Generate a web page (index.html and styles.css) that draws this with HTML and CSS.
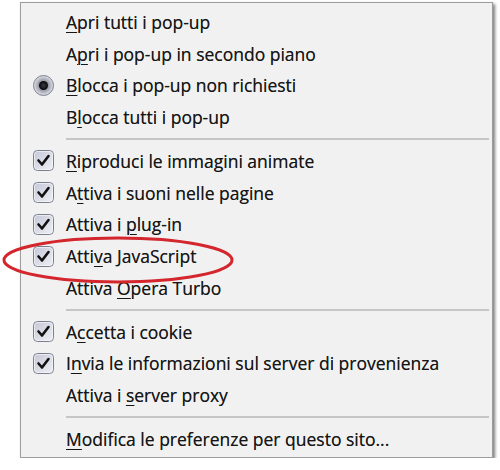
FILE: index.html
```html
<!DOCTYPE html>
<html lang="it">
<head>
    <meta charset="UTF-8">
    <title>Menu pop-up</title>
    <link rel="stylesheet" href="styles.css">
</head>
<body>
    <!-- shared checkbox graphic -->
    <svg width="0" height="0" class="defs">
        <defs>
            <linearGradient id="boxFill" x1="0" y1="0" x2="1" y2="1">
                <stop offset="0" stop-color="#c3c6d6"/>
                <stop offset="1" stop-color="#f0f1f6"/>
            </linearGradient>
            <radialGradient id="dotFill">
                <stop offset="0" stop-color="#3a3a44"/>
                <stop offset="1" stop-color="#050507"/>
            </radialGradient>
            <radialGradient id="ringFill">
                <stop offset="0.5" stop-color="#9a9ca8"/>
                <stop offset="1" stop-color="#e2e3ea"/>
            </radialGradient>
            <symbol id="tick" viewBox="0 0 21 21">
                <rect x="0.5" y="0.5" width="20" height="20" rx="4" fill="url(#boxFill)" stroke="#7b7e8c"/>
                <rect x="1.5" y="1.5" width="18" height="18" rx="3" fill="none" stroke="#f6f6fa" stroke-opacity="0.7"/>
                <path d="M5.5 10.5 L9 14.5 L15.5 6" fill="none" stroke="#111" stroke-width="2.6" stroke-linecap="round" stroke-linejoin="round"/>
            </symbol>
            <symbol id="dot" viewBox="0 0 21 21">
                <circle cx="10.5" cy="10.5" r="10" fill="url(#ringFill)" stroke="#7b7e8c"/>
                <circle cx="10.5" cy="10.5" r="4.5" fill="url(#dotFill)"/>
            </symbol>
        </defs>
    </svg>

    <div class="menu">
        <!-- Pop-up -->
        <div class="item"><span class="mark"></span><span class="label"><u>A</u>pri tutti i pop-up</span></div>
        <div class="item"><span class="mark"></span><span class="label">A<u>p</u>ri i pop-up in secondo piano</span></div>
        <div class="item"><svg class="mark"><use href="#dot"/></svg><span class="label"><u>B</u>locca i pop-up non richiesti</span></div>
        <div class="item"><span class="mark"></span><span class="label">B<u>l</u>occa tutti i pop-up</span></div>
        <div class="sep"></div>

        <!-- Contenuti -->
        <div class="item"><svg class="mark"><use href="#tick"/></svg><span class="label"><u>R</u>iproduci le immagini animate</span></div>
        <div class="item"><svg class="mark"><use href="#tick"/></svg><span class="label">A<u>t</u>tiva i suoni nelle pagine</span></div>
        <div class="item"><svg class="mark"><use href="#tick"/></svg><span class="label">Attiva i <u>p</u>lug-in</span></div>
        <div class="item"><svg class="mark"><use href="#tick"/></svg><span class="label">Atti<u>v</u>a JavaScript</span></div>
        <div class="item"><span class="mark"></span><span class="label">Attiva <u>O</u>pera Turbo</span></div>
        <div class="sep"></div>

        <!-- Rete -->
        <div class="item"><svg class="mark"><use href="#tick"/></svg><span class="label">A<u>c</u>cetta i cookie</span></div>
        <div class="item"><svg class="mark"><use href="#tick"/></svg><span class="label">I<u>n</u>via le informazioni sul server di provenienza</span></div>
        <div class="item"><span class="mark"></span><span class="label">Attiva i <u>s</u>erver proxy</span></div>
        <div class="sep"></div>

        <div class="item"><span class="mark"></span><span class="label"><u>M</u>odifica le preferenze per questo sito...</span></div>

        <!-- cerchio rosso sopra la voce JavaScript -->
        <svg class="circle" width="240" height="52" viewBox="0 0 240 52">
            <ellipse cx="118" cy="26" rx="114" ry="22" fill="none" stroke="#d3262d" stroke-width="3"/>
        </svg>
    </div>
</body>
</html>
```

FILE: styles.css
```css
/* Basic styling */
body {
    margin: 0;
    background-color: #fff;
    font-family: "Open Sans", "Liberation Sans", sans-serif;
    color: #161616;
}
.defs {
    position: absolute;
}
.menu {
    position: relative;
    width: 473px;
    margin: 2px 0 0 20px;
    padding: 3px 0 0 0;
    height: 456px;
    box-sizing: border-box;
    background-color: #f1f1f1;
    border: 1px solid #9c9c9c;
    box-shadow: 2px 2px 3px rgba(0, 0, 0, 0.5);
}
.item {
    display: flex;
    align-items: center;
    height: 31.75px;
}
.label {
    font-size: 17.5px;
    white-space: nowrap;
    text-shadow: 0 0 0.4px rgba(0, 0, 0, 0.6);
}
.label u {
    text-underline-offset: 3px;
    text-decoration-thickness: 1px;
}
.mark {
    display: block;
    width: 21px;
    height: 21px;
    margin: 0 12px 0 12px;
    flex-shrink: 0;
}
.sep {
    height: 12px;
    margin: 0 3px 0 45px;
    display: flex;
    align-items: center;
}
.sep::before {
    content: "";
    flex: 1;
    height: 2px;
    background-color: #c6c6c6;
}
.circle {
    position: absolute;
    left: -21px;
    top: 231px;
}
```
